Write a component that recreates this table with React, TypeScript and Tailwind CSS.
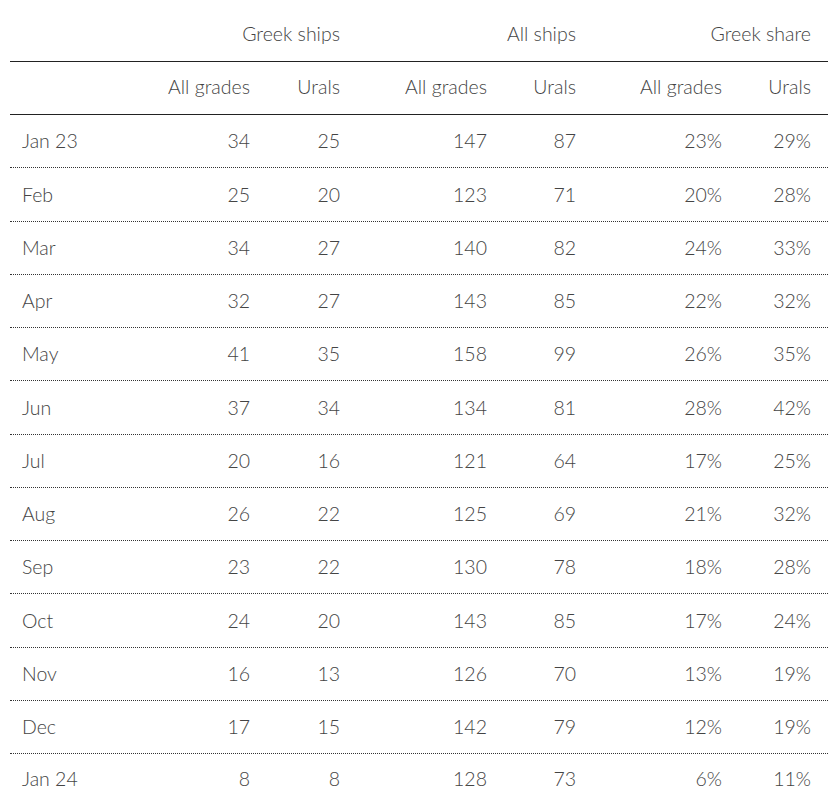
const rows: [string, number, number, number, number, string, string][] = [
  ["Jan 23", 34, 25, 147, 87, "23%", "29%"],
  ["Feb", 25, 20, 123, 71, "20%", "28%"],
  ["Mar", 34, 27, 140, 82, "24%", "33%"],
  ["Apr", 32, 27, 143, 85, "22%", "32%"],
  ["May", 41, 35, 158, 99, "26%", "35%"],
  ["Jun", 37, 34, 134, 81, "28%", "42%"],
  ["Jul", 20, 16, 121, 64, "17%", "25%"],
  ["Aug", 26, 22, 125, 69, "21%", "32%"],
  ["Sep", 23, 22, 130, 78, "18%", "28%"],
  ["Oct", 24, 20, 143, 85, "17%", "24%"],
  ["Nov", 16, 13, 126, 70, "13%", "19%"],
  ["Dec", 17, 15, 142, 79, "12%", "19%"],
  ["Jan 24", 8, 8, 128, 73, "6%", "11%"],
];

const cols = "grid grid-cols-[110px_147px_90px_147px_89px_146px_89px]";

export default function App() {
  return (
    <div className="min-h-[796px] bg-white pl-[10px] font-['Lato','Liberation_Sans',sans-serif] text-[19.5px] font-light leading-none text-[#444]">
      <div className="w-[818px]">
        <div className={`${cols} h-[62px] items-center border-b border-[#222] pt-[6px]`}>
          <div />
          <div className="col-span-2 pr-[17px] text-right">Greek ships</div>
          <div className="col-span-2 pr-[17px] text-right">All ships</div>
          <div className="col-span-2 pr-[17px] text-right">Greek share</div>
        </div>
        <div className={`${cols} h-[53px] items-center border-b border-[#222] pb-[2px]`}>
          <div />
          {["All grades", "Urals", "All grades", "Urals", "All grades", "Urals"].map((h, i) => (
            <div key={i} className="pr-[17px] text-right">
              {h}
            </div>
          ))}
        </div>
        {rows.map((r, i) => (
          <div
            key={r[0]}
            className={`${cols} h-[53.25px] items-center ${i < rows.length - 1 ? "border-b border-dotted border-[#333]" : "pb-[4px]"}`}
          >
            <div className="pl-3">{r[0]}</div>
            {r.slice(1).map((v, j) => (
              <div key={j} className="pr-[17px] text-right">
                {v}
              </div>
            ))}
          </div>
        ))}
      </div>
    </div>
  );
}
